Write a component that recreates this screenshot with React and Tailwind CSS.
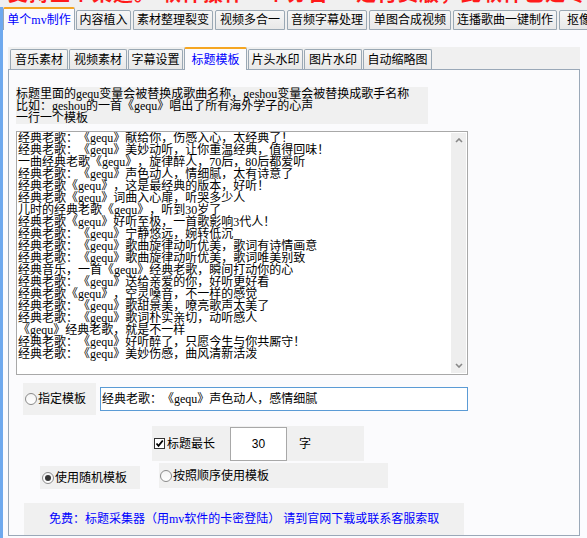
import React from 'react'

const FONT = { fontFamily: '"Liberation Serif", "Noto Sans CJK SC", sans-serif' }

const outerTabs = [
  ['内容植入', 55],
  ['素材整理裂变', 80],
  ['视频多合一', 70],
  ['音频字幕处理', 80],
  ['单图合成视频', 82],
  ['连播歌曲一键制作', 104],
  ['抠像', 40],
]

const innerTabs = [
  ['音乐素材', 58],
  ['视频素材', 58],
  ['字幕设置', 55],
  ['标题模板', 63, true],
  ['片头水印', 55],
  ['图片水印', 58],
  ['自动缩略图', 69],
]

const lines = [
  '经典老歌：《gequ》献给你，伤感入心，太经典了！',
  '经典老歌：《gequ》美妙动听，让你重温经典，值得回味！',
  '一曲经典老歌《gequ》，旋律醉人，70后，80后都爱听',
  '经典老歌：《gequ》声色动人，情细腻，太有诗意了',
  '经典老歌《gequ》，这是最经典的版本，好听！',
  '经典老歌《gequ》词曲入心扉，听哭多少人',
  '儿时的经典老歌《gequ》，听到30岁了',
  '经典老歌《gequ》好听至极，一首歌影响3代人！',
  '经典老歌：《gequ》宁静悠远，婉转低沉',
  '经典老歌：《gequ》歌曲旋律动听优美，歌词有诗情画意',
  '经典老歌：《gequ》歌曲旋律动听优美，歌词唯美别致',
  '经典音乐，一首《gequ》经典老歌，瞬间打动你的心',
  '经典老歌：《gequ》送给亲爱的你，好听更好看',
  '经典老歌《gequ》，空灵嗓音，不一样的感觉',
  '经典老歌：《gequ》歌甜景美，嘹亮歌声太美了',
  '经典老歌：《gequ》歌词朴实亲切，动听感人',
  '《gequ》经典老歌，就是不一样',
  '经典老歌：《gequ》好听醉了，只愿今生与你共厮守！',
  '经典老歌：《gequ》美妙伤感，曲风清新活泼',
]

function Radio({ checked }) {
  return (
    <span className="w-[12px] h-[12px] rounded-full border border-[#8a8a8a] bg-gradient-to-b from-[#f4f4f4] to-white flex items-center justify-center shrink-0">
      {checked && <span className="w-[6px] h-[6px] rounded-full bg-[#333]" />}
    </span>
  )
}

export default function App() {
  return (
    <div
      className="w-[587px] h-[538px] overflow-hidden bg-[#f0f0f0] flex flex-col text-black text-[12px] [text-spacing-trim:space-all]"
      style={FONT}
    >
      <div className="h-[7px] overflow-hidden shrink-0">
        <div className="mt-[-16px] pl-[8px] whitespace-nowrap text-[20px] leading-[20px] font-bold text-[#ff1a1a] tracking-[1px]">
          支持五个渠道。 软件操作一个分台 一定付费版，此软件已是专业版本
        </div>
      </div>

      <div className="flex-1 flex flex-col border-l-[3px] border-[#6fa9ee]">
        <div className="h-[23px] flex items-end shrink-0">
          <div className="w-[72px] mr-[1px] shrink-0 h-[23px] bg-[#fbfbfe] border-t-2 border-[#f5a623] border-x border-x-[#9aa8b4] rounded-t-[2px] flex items-center justify-center text-[#0000ff] whitespace-nowrap">
            单个mv制作
          </div>
          {outerTabs.map(([t, w]) => (
            <div
              key={t}
              style={{ width: w }}
              className="h-[20px] mr-[2px] shrink-0 border border-[#9aa8b4] rounded-t-[2px] bg-gradient-to-b from-[#f7f7f7] to-[#e8e8e8] flex items-center justify-center whitespace-nowrap"
            >
              {t}
            </div>
          ))}
        </div>

        <div className="flex-1 bg-[#fbfbfe] pl-[5px] pt-[17px]">
          <div className="w-[572px]">
            <div className="h-[22px] bg-[#f0f0f0] flex items-end gap-[1px] pl-[2px]">
              {innerTabs.map(([t, w, sel]) => (
                <div
                  key={t}
                  style={{ width: w }}
                  className={
                    sel
                      ? 'h-[23px] -mb-px bg-[#fbfbfd] border-t-2 border-[#f5a623] border-x border-x-[#9aa8b4] rounded-t-[2px] flex items-center justify-center text-[#0000ff] relative whitespace-nowrap'
                      : 'h-[20px] border border-b-0 border-[#9aa8b4] rounded-t-[2px] bg-gradient-to-b from-[#f7f7f7] to-[#e8e8e8] flex items-center justify-center whitespace-nowrap'
                  }
                >
                  {t}
                </div>
              ))}
            </div>

            <div className="h-[467px] border border-[#9aa8b8] bg-[#fbfbfd] pl-[7px] pt-[17px]">
              <div className="w-[412px] h-[37px] bg-[#f0f0f0] leading-[12px] pt-[1px] whitespace-nowrap">
                <div>标题里面的gequ变量会被替换成歌曲名称，geshou变量会被替换成歌手名称</div>
                <div>比如：geshou的一首《gequ》唱出了所有海外学子的心声</div>
                <div>一行一个模板</div>
              </div>

              <div className="mt-[7px] w-[452px] h-[244px] border border-[#a8a8a8] bg-white flex">
                <div className="flex-1 pl-[1px] leading-[12px] whitespace-nowrap overflow-hidden">
                  {lines.map((l, i) => (
                    <div key={i}>{l}</div>
                  ))}
                </div>
                <div className="w-[15px] my-px mr-px bg-[#eeeeee] flex flex-col justify-between items-center py-[5px]">
                  <svg width="8" height="5" viewBox="0 0 8 5">
                    <path d="M1 4 L4 1 L7 4" stroke="#888" strokeWidth="1.6" fill="none" />
                  </svg>
                  <svg width="8" height="5" viewBox="0 0 8 5">
                    <path d="M1 1 L4 4 L7 1" stroke="#888" strokeWidth="1.6" fill="none" />
                  </svg>
                </div>
              </div>

              <div className="mt-[8px] flex items-center">
                <div className="ml-[7px] w-[73px] h-[32px] bg-[#f0f0f0] flex items-center gap-[1px] pl-[2px]">
                  <Radio />
                  <span>指定模板</span>
                </div>
                <div className="ml-[4px] w-[368px] h-[24px] border border-[#5b9bd5] bg-white flex items-center pl-[1px] whitespace-nowrap">
                  经典老歌：《gequ》声色动人，感情细腻
                </div>
              </div>

              <div className="mt-[11px] ml-[136px] w-[212px] h-[35px] bg-[#f0f0f0] flex items-center pl-[2px]">
                <span className="w-[11px] h-[11px] border border-[#333] bg-white flex items-center justify-center shrink-0">
                  <svg width="9" height="9" viewBox="0 0 9 9">
                    <path d="M1.5 4.5 L3.5 6.8 L7.8 1.5" stroke="#000" strokeWidth="1.8" fill="none" />
                  </svg>
                </span>
                <span className="ml-[2px]">标题最长</span>
                <div
                  className="ml-[15px] w-[57px] h-[34px] border border-[#a8a8a8] bg-white flex items-center justify-center"
                  style={{ fontFamily: '"Liberation Sans", sans-serif' }}
                >
                  30
                </div>
                <span className="ml-[12px]">字</span>
              </div>

              <div className="mt-[2px] flex items-start">
                <div className="mt-[3px] ml-[24px] w-[100px] h-[23px] bg-[#f0f0f0] flex items-center gap-[1px] pl-[2px]">
                  <Radio checked />
                  <span>使用随机模板</span>
                </div>
                <div className="ml-[19px] w-[229px] h-[25px] bg-[#f0f0f0] flex items-center gap-[1px] pl-[1px]">
                  <Radio />
                  <span>按照顺序使用模板</span>
                </div>
              </div>

              <div className="mt-[14px] ml-[8px] w-[440px] h-[32px] bg-[#f0f0f0] flex items-center pl-[25px] text-[#0000ff] whitespace-nowrap">
                免费：标题采集器（用mv软件的卡密登陆） 请到官网下载或联系客服索取
              </div>
            </div>
          </div>
        </div>
      </div>
    </div>
  )
}
